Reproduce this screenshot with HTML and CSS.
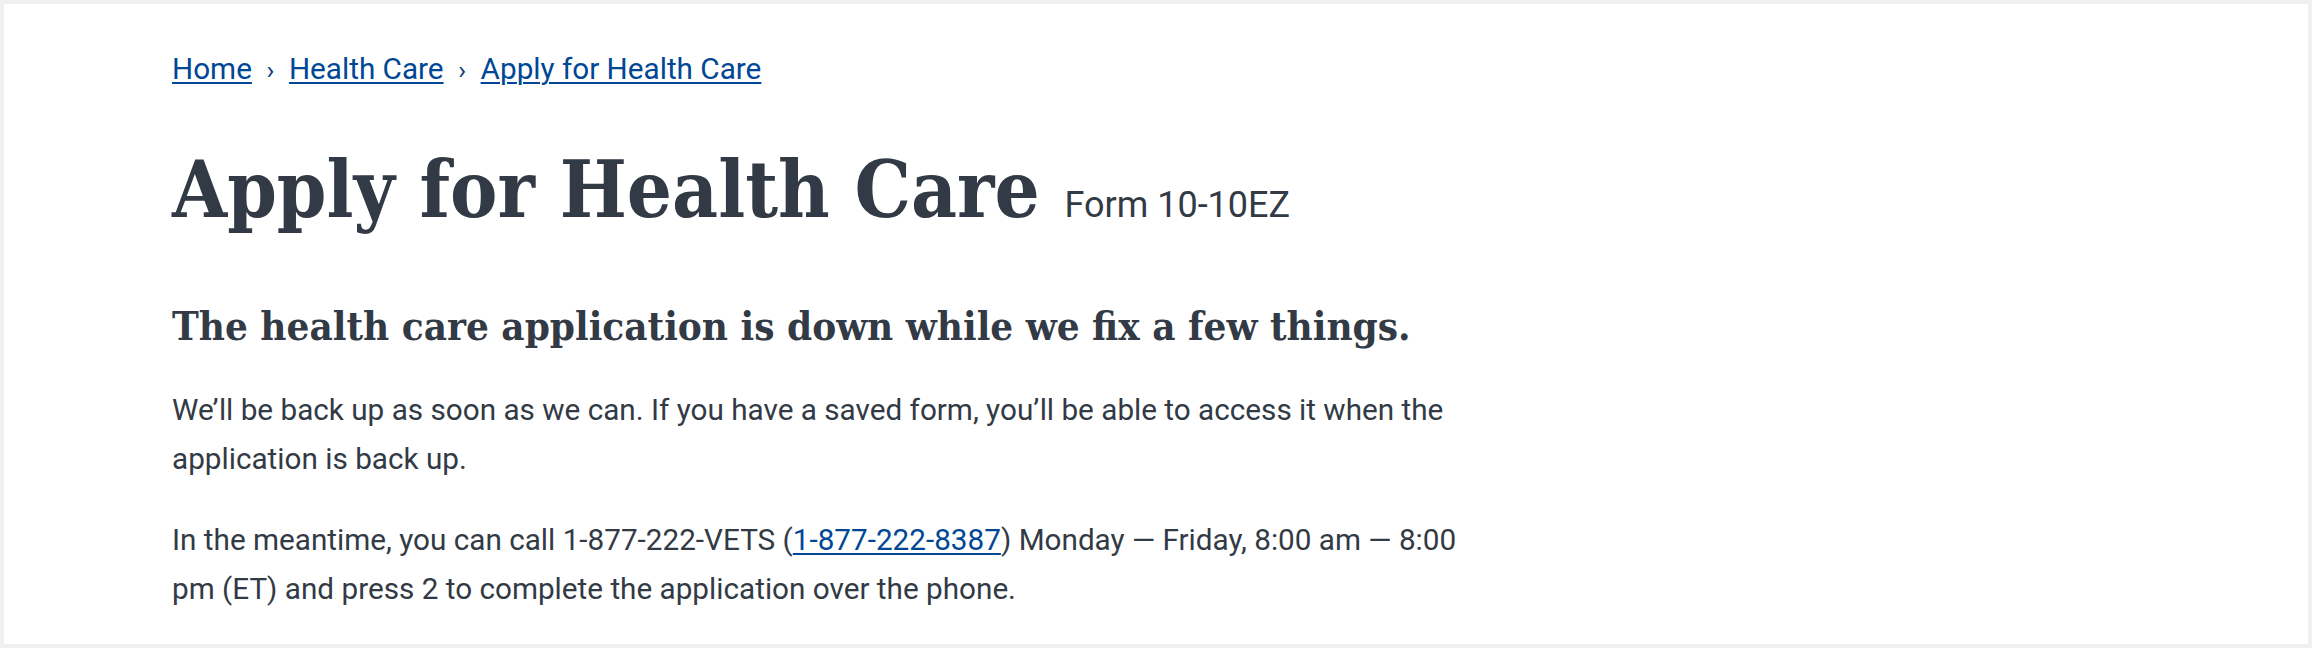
FILE: index.html
```html
<!DOCTYPE html>
<html lang="en">
<head>
<meta charset="utf-8">
<title>Apply for Health Care</title>
<link rel="stylesheet" href="styles.css">
</head>
<body>
<main class="page">
  <nav class="breadcrumbs" aria-label="Breadcrumb">
    <a href="#" class="crumb">Home</a>
    <span class="sep">›</span>
    <a href="#" class="crumb">Health Care</a>
    <span class="sep">›</span>
    <a href="#" class="crumb">Apply for Health Care</a>
  </nav>
  <h1 class="title">Apply for Health Care <span class="form-num">Form 10-10EZ</span></h1>
  <h2 class="subtitle">The health care application is down while we fix a few things.</h2>
  <p class="text text-first">We’ll be back up as soon as we can. If you have a saved form, you’ll be able to access it when the application is back up.</p>
  <p class="text">In the meantime, you can call 1-877-222-VETS (<a href="#" class="phone">1-877-222-8387</a>) Monday — Friday, 8:00 am — 8:00 pm (ET) and press 2 to complete the application over the phone.</p>
</main>
</body>
</html>
```
FILE: styles.css
```css
html {
  background: #f0f0f0;
}
body {
  margin: 4px;
  background: #f0f0f0;
  font-family: Roboto, "Liberation Sans", sans-serif;
  color: #323a45;
}
.page {
  display: flex;
  flex-direction: column;
  align-items: flex-start;
  box-sizing: border-box;
  height: 640px;
  background: #ffffff;
  padding: 41px 0 0 168px;
}
.breadcrumbs {
  display: flex;
  align-items: baseline;
  font-size: 29.7px;
  line-height: 48px;
}
.crumb,
.phone {
  color: #004795;
  text-decoration: underline;
  text-decoration-thickness: 2px;
  text-underline-offset: 3px;
}
.sep {
  display: inline-block;
  width: 37px;
  text-align: center;
  color: #0b3c73;
  font-size: 26px;
}
.title {
  margin: 48px 0 0;
  font-family: "DejaVu Serif Condensed", "DejaVu Serif", serif;
  font-weight: bold;
  font-size: 79px;
  line-height: 95px;
  white-space: nowrap;
}
.form-num {
  font-family: Roboto, "Liberation Sans", sans-serif;
  font-weight: normal;
  font-size: 36px;
  line-height: 36px;
}
.subtitle {
  margin: 65px 0 0;
  font-family: "DejaVu Serif Condensed", "DejaVu Serif", serif;
  font-weight: bold;
  font-size: 40px;
  line-height: 48px;
}
.text {
  margin: 32px 0 0;
  max-width: 1300px;
  font-size: 29.7px;
  line-height: 49px;
}
.text-first {
  margin-top: 35px;
}
```
